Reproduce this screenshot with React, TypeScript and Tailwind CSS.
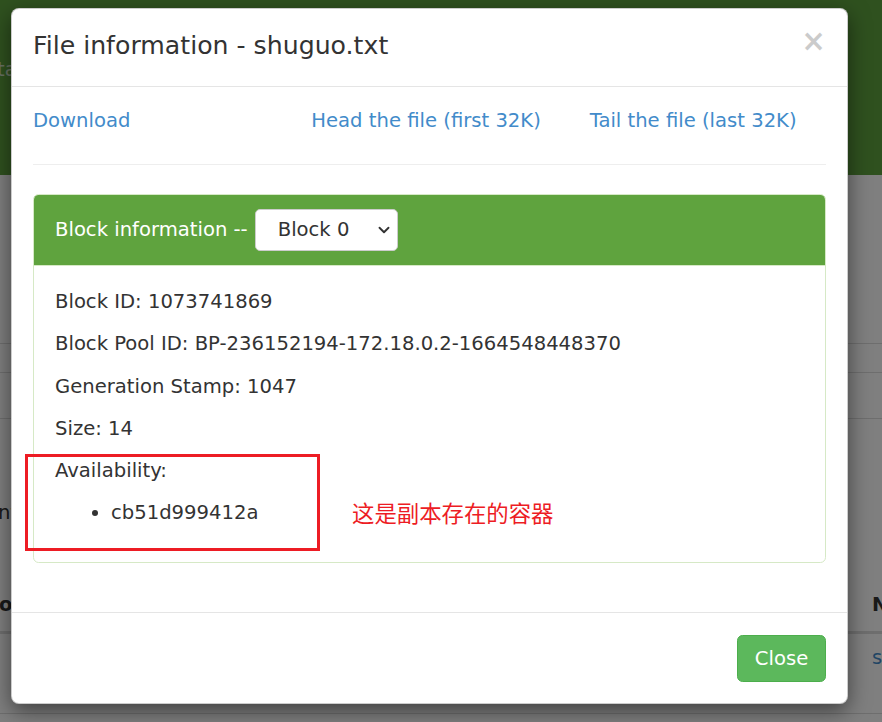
import { ChevronDown } from 'lucide-react';

const blockFields = [
  'Block ID: 1073741869',
  'Block Pool ID: BP-236152194-172.18.0.2-1664548448370',
  'Generation Stamp: 1047',
  'Size: 14',
  'Availability:',
];

function BackgroundPage() {
  return (
    <div className="text-[19.6px] leading-[28px] text-[#333]">
      <div className="h-[175px] bg-[#5fa33e] pt-[56px]">
        <span className="-ml-[3px] text-[#d2e3c8]">ta</span>
      </div>
      <div className="bg-white">
        <div className="h-[169px] border-b border-[#ddd]" />
        <div className="h-[29px] border-b border-[#ddd]" />
        <div className="h-[46px] border-b border-[#ddd]" />
        <div className="h-[156px] pt-[80px]">
          <span className="-ml-[2px]">nt</span>
        </div>
        <div className="flex h-[59px] items-center border-b-[3px] border-[#ddd] pt-[3px] font-bold">
          <span className="-ml-[1px] w-[873px] shrink-0">or</span>
          <span className="shrink-0">Name</span>
        </div>
        <div className="flex h-[80px] border-b border-[#ddd] pt-[10px]">
          <span className="w-[872px] shrink-0" />
          <span className="shrink-0 text-[#428bca]">shuguo.txt</span>
        </div>
        <div className="h-[20px]" />
      </div>
    </div>
  );
}

export default function App() {
  return (
    <div className="relative h-[722px] w-[882px] overflow-hidden font-['DejaVu_Sans','Noto_Sans_CJK_SC',sans-serif]">
      <BackgroundPage />
      <div className="absolute inset-0 bg-black/50" />

      <div className="absolute left-[11px] top-[8px] w-[837px] rounded-[8px] border border-black/20 bg-white text-[19.6px] leading-[28px] text-[#333] shadow-[0_7px_21px_rgba(0,0,0,0.5)]">
        <div className="flex items-start justify-between border-b border-[#e5e5e5] px-[21px] pb-[22px] pt-[19px]">
          <h4 className="text-[25.2px] leading-[36px]">File information - shuguo.txt</h4>
          <button className="-mt-[1px] text-[29.4px] font-bold leading-none text-black opacity-20">×</button>
        </div>

        <div className="px-[21px] pb-[21px] pt-[20px]">
          <div className="grid grid-cols-3 gap-x-[42px] text-[#428bca]">
            <a>Download</a>
            <a>Head the file (first 32K)</a>
            <a>Tail the file (last 32K)</a>
          </div>
          <hr className="mb-[29px] mt-[29px] border-t border-[#eee]" />

          <div className="mb-[28px] overflow-hidden rounded-[5.6px] border border-[#d6e9c6]">
            <div className="flex items-center border-b border-[#d6e9c6] bg-[#5fa33e] px-[21px] py-[14px] text-white">
              <span>Block information --</span>
              <div className="ml-[7px] flex h-[42px] w-[143px] items-center justify-between rounded-[5px] border border-[#ccc] bg-white pl-[22px] pr-[4px] text-[#333]">
                <span>Block 0</span>
                <ChevronDown size={18} strokeWidth={2.5} className="text-[#333]" />
              </div>
            </div>
            <div className="px-[21px] pb-[21px] pt-[22px]">
              {blockFields.map((f) => (
                <p key={f} className="mb-[14.25px]">
                  {f}
                </p>
              ))}
              <ul className="mb-[14px] mt-[2px] list-disc pl-[56px]">
                <li>cb51d999412a</li>
              </ul>
            </div>
          </div>
        </div>

        <div className="flex justify-end border-t border-[#e5e5e5] px-[21px] pb-[21px] pt-[22px]">
          <button className="rounded-[5.6px] border border-[#4cae4c] bg-[#5cb85c] px-[16.8px] py-[8.5px] leading-[28px] text-white">
            Close
          </button>
        </div>
      </div>

      {/* red annotation drawn over the screenshot */}
      <div className="absolute left-[25px] top-[454px] h-[97px] w-[295px] border-[3px] border-[#ed1c24]" />
      <div className="absolute left-[352px] top-[500px] text-[22.4px] leading-[24px] text-[#ed1c24] font-['Noto_Sans_CJK_SC',sans-serif]">
        这是副本存在的容器
      </div>
    </div>
  );
}
